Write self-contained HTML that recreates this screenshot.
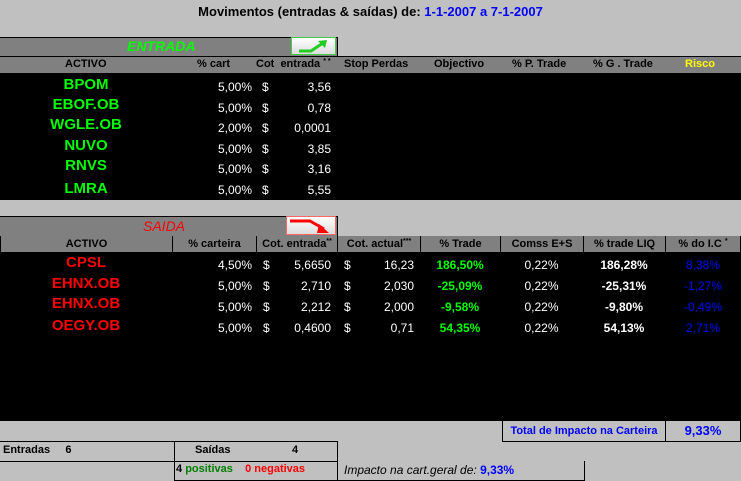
<!DOCTYPE html>
<html><head><meta charset="utf-8"><style>
*{margin:0;padding:0;box-sizing:border-box}
body{width:741px;height:481px;background:#c0c0c0;position:relative;overflow:hidden;font-family:"Liberation Sans",Arial,sans-serif;font-size:12px}
.a{position:absolute;white-space:nowrap}
.b{font-weight:bold}
.hd{font-size:11px;font-weight:bold;color:#000}
.g{color:#00ff00}.r{color:#ff0000}.w{color:#fff}.bl{color:#0000ff}
.c{text-align:center}.rt{text-align:right}
.tk{font-size:15px;font-weight:bold;text-align:center;width:172px;left:0}
.s{font-size:7px;position:relative;top:-4px;line-height:0}
.cell{position:absolute;top:236px;height:17px;border:1px solid #000;border-top:none;background:#808080;text-align:center;font-size:11px;font-weight:bold;line-height:16px}
</style></head><body>
<div class="a b" style="left:0;width:741px;top:4px;text-align:center;font-size:13px">Movimentos (entradas &amp; saídas) de: <span class="bl">1-1-2007 a 7-1-2007</span></div>

<!-- ENTRADA -->
<div class="a" style="left:0;top:37px;width:338px;height:19px;background:#808080;border-top:1px solid #000;border-right:1px solid #000"></div>
<div class="a b g" style="left:127px;top:38px;font-size:14px;font-style:italic">ENTRADA</div>
<div class="a" style="left:291px;top:37px;width:45px;height:18px;background:linear-gradient(#fff,#ddd);border:1px solid #4c4"></div>
<svg class="a" style="left:291px;top:37px" width="45" height="18"><path d="M8 14 H20 L32 6" stroke="#2c2" stroke-width="3" fill="none"/><path d="M27 4 L36 3 L34 11 Z" fill="#2c2"/></svg>
<div class="a" style="left:0;top:56px;width:741px;height:17px;background:#808080;border-top:1px solid #000"></div>
<div class="a hd" style="left:65px;top:58px">ACTIVO</div>
<div class="a hd" style="left:197px;top:58px">% cart</div>
<div class="a hd" style="left:256px;top:58px">Cot &nbsp;entrada <span class="s">* *</span></div>
<div class="a hd" style="left:344px;top:58px">Stop Perdas</div>
<div class="a hd" style="left:434px;top:58px">Objectivo</div>
<div class="a hd" style="left:512px;top:58px">% P. Trade</div>
<div class="a hd" style="left:593px;top:58px">% G . Trade</div>
<div class="a hd" style="left:685px;top:58px;color:#ffff00">Risco</div>
<div class="a" style="left:0;top:73px;width:741px;height:127px;background:#000"></div>
<div class="a tk g" style="top:76px">BPOM</div>
<div class="a tk g" style="top:96px">EBOF.OB</div>
<div class="a tk g" style="top:116px">WGLE.OB</div>
<div class="a tk g" style="top:137px">NUVO</div>
<div class="a tk g" style="top:157px">RNVS</div>
<div class="a tk g" style="top:180px">LMRA</div>
<div class="a w rt" style="left:200px;width:52px;top:77px;line-height:20.5px">5,00%<br>5,00%<br>2,00%<br>5,00%<br>5,00%<br>5,00%</div>
<div class="a w" style="left:262px;top:77px;line-height:20.5px">$<br>$<br>$<br>$<br>$<br>$</div>
<div class="a w rt" style="left:280px;width:51px;top:77px;line-height:20.5px">3,56<br>0,78<br>0,0001<br>3,85<br>3,16<br>5,55</div>

<!-- SAIDA -->
<div class="a" style="left:0;top:216px;width:338px;height:20px;background:#808080;border-top:1px solid #000;border-right:1px solid #000"></div>
<div class="a r" style="left:143px;top:218px;font-size:14px;font-style:italic">SAIDA</div>
<div class="a" style="left:286px;top:216px;width:50px;height:19px;background:linear-gradient(#fff,#ddd);border:1px solid #f66"></div>
<svg class="a" style="left:286px;top:216px" width="50" height="19"><path d="M4 5 H24 L38 13" stroke="#f00" stroke-width="3" fill="none"/><path d="M33 8 L43 17 L31 17 Z" fill="#f00"/></svg>
<div class="a" style="left:0;top:236px;width:741px;height:1px;background:#000"></div>
<div class="cell" style="left:0;width:173px">ACTIVO</div>
<div class="cell" style="left:172px;width:85px">% carteira</div>
<div class="cell" style="left:256px;width:82px">Cot. entrada<span class="s">**</span></div>
<div class="cell" style="left:337px;width:84px">Cot. actual<span class="s">***</span></div>
<div class="cell" style="left:420px;width:81px">% Trade</div>
<div class="cell" style="left:500px;width:84px">Comss E+S</div>
<div class="cell" style="left:583px;width:83px">% trade LIQ</div>
<div class="cell" style="left:665px;width:76px">% do I.C <span class="s">*</span></div>
<div class="a" style="left:0;top:253px;width:741px;height:168px;background:#000"></div>
<div class="a tk r" style="top:254px">CPSL</div>
<div class="a tk r" style="top:275px">EHNX.OB</div>
<div class="a tk r" style="top:295px">EHNX.OB</div>
<div class="a tk r" style="top:317px">OEGY.OB</div>
<div class="a w rt" style="left:200px;width:52px;top:255px;line-height:21px">4,50%<br>5,00%<br>5,00%<br>5,00%</div>
<div class="a w" style="left:263px;top:255px;line-height:21px">$<br>$<br>$<br>$</div>
<div class="a w rt" style="left:280px;width:51px;top:255px;line-height:21px">5,6650<br>2,710<br>2,212<br>0,4600</div>
<div class="a w" style="left:344px;top:255px;line-height:21px">$<br>$<br>$<br>$</div>
<div class="a w rt" style="left:360px;width:54px;top:255px;line-height:21px">16,23<br>2,030<br>2,000<br>0,71</div>
<div class="a b g c" style="left:420px;width:80px;top:255px;line-height:21px">186,50%<br>-25,09%<br>-9,58%<br>54,35%</div>
<div class="a w c" style="left:500px;width:83px;top:255px;line-height:21px">0,22%<br>0,22%<br>0,22%<br>0,22%</div>
<div class="a b w c" style="left:583px;width:82px;top:255px;line-height:21px">186,28%<br>-25,31%<br>-9,80%<br>54,13%</div>
<div class="a bl c" style="left:665px;width:76px;top:255px;line-height:21px">8,38%<br>-1,27%<br>-0,49%<br>2,71%</div>

<!-- footer -->
<div class="a b bl" style="left:502px;top:421px;width:164px;height:21px;border:1px solid #000;border-top:none;font-size:11px;line-height:20px;text-align:center">Total de Impacto na Carteira</div>
<div class="a b bl" style="left:665px;top:421px;width:76px;height:21px;border:1px solid #000;border-top:none;font-size:13px;line-height:20px;text-align:center">9,33%</div>
<div class="a" style="left:0;top:441px;width:338px;height:1px;background:#000"></div>
<div class="a" style="left:0;top:461px;width:174px;height:1px;background:#000"></div>
<div class="a b" style="left:3px;top:444px;font-size:11px">Entradas &nbsp;&nbsp;&nbsp;&nbsp;6</div>
<div class="a" style="left:174px;top:441px;width:164px;height:21px;border:1px solid #000"></div>
<div class="a b" style="left:195px;top:444px;font-size:11px">Saídas</div>
<div class="a b" style="left:292px;top:444px;font-size:11px">4</div>
<div class="a" style="left:174px;top:461px;width:164px;height:20px;border:1px solid #000;border-top:none"></div>
<div class="a b" style="left:176px;top:463px;font-size:11px">4 <span style="color:#008000">positivas</span> &nbsp;&nbsp;&nbsp;<span class="r">0 negativas</span></div>
<div class="a" style="left:337px;top:461px;width:248px;height:20px;border:1px solid #000;border-top:none"></div>
<div class="a" style="left:344px;top:463px;font-size:12px;font-style:italic">Impacto na cart.geral de: <b class="bl" style="font-style:normal">9,33%</b></div>
</body></html>
